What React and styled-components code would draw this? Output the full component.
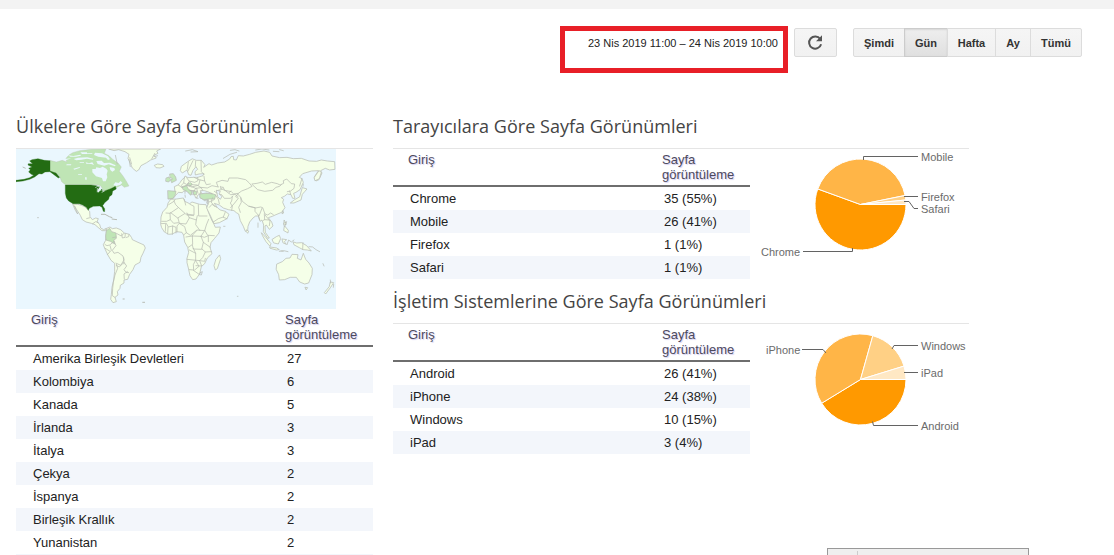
import React from 'react'
import styled, { createGlobalStyle } from 'styled-components';

const GlobalStyle = createGlobalStyle`
    body {
        margin: 0;
        background: #fff;
        color: #222;
        font-family: "Liberation Sans", Arial, sans-serif;
        font-size: 13px;
        overflow: hidden;
    }
`;

const Page = styled.div`
    height: 555px;
    overflow: hidden;
    display: flex;
    flex-direction: column;
`;

const TopStrip = styled.div`
    flex: none;
    height: 9px;
    background: #f3f3f3;
`;

const Toolbar = styled.div`
    flex: none;
    display: flex;
    align-items: flex-start;
    height: 106px;
    box-sizing: border-box;
    padding: 17px 32px 0 0;
    justify-content: flex-end;
`;

const DateRange = styled.div`
    box-sizing: border-box;
    width: 228px;
    height: 47px;
    border: 5px solid #e81f27;
    padding: 4px 5px 0 0;
    text-align: right;
    font-size: 11px;
    line-height: 16px;
    white-space: nowrap;
`;

const Button = styled.button`
    box-sizing: border-box;
    height: 29px;
    width: ${props => props.$width}px;
    margin: 2px 0 0 ${props => props.$gap || 0}px;
    padding: 0;
    display: flex;
    align-items: center;
    justify-content: center;
    border: 1px solid ${props => props.$active ? '#ccc' : '#dcdcdc'};
    border-radius: ${props => props.$radius || '0'};
    background: ${props => props.$active
        ? 'linear-gradient(#eee, #e0e0e0)'
        : 'linear-gradient(#f5f5f5, #f1f1f1)'};
    box-shadow: ${props => props.$active ? 'inset 0 1px 2px rgba(0,0,0,.1)' : 'none'};
    color: #333;
    font: bold 11px "Liberation Sans", Arial, sans-serif;
`;

const ButtonGroup = styled.div`
    display: flex;
    margin-left: 16px;
    ${Button} + ${Button} {
        margin-left: -1px;
    }
`;

const Columns = styled.div`
    flex: none;
    display: flex;
    gap: 20px;
    padding-left: 16px;
`;

const Column = styled.div`
    width: ${props => props.$width}px;
`;

const Section = styled.section`
    height: ${props => props.$height ? props.$height + 'px' : 'auto'};
`;

const Title = styled.h2`
    margin: 0;
    height: 33px;
    border-bottom: 1px solid #e5e5e5;
    font: normal 18px/23px "Open Sans", sans-serif;
    color: #444;
    letter-spacing: 0.02px;
    white-space: nowrap;
`;

const Body = styled.div`
    display: flex;
`;

const Table = styled.table`
    width: 357px;
    border-collapse: collapse;
    table-layout: fixed;
`;

const HeadCell = styled.th`
    height: 36px;
    padding: 0 0 0 15px;
    width: ${props => props.$width || 'auto'};
    vertical-align: top;
    text-align: left;
    font-weight: normal;
    line-height: 15px;
    color: #4d4a5e;
    text-shadow: 1px 1px 1px #d3cdf0;
    border-bottom: 2px solid #6e6e6e;
    > span {
        display: block;
        padding-top: 3px;
    }
`;

const Row = styled.tr`
    height: 23px;
    background: ${props => props.$shaded ? '#f3f6fb' : 'transparent'};
`;

const Cell = styled.td`
    padding: 0 0 0 17px;
    line-height: 23px;
`;

const Map = styled.svg`
    display: block;
    background: #eaf7fe;
`;

const Chart = styled.svg`
    display: block;
    font: 11px "Liberation Sans", Arial, sans-serif;
`;

const Notice = styled.div`
    position: absolute;
    left: 827px;
    top: 548px;
    width: 200px;
    height: 7px;
    border: 1px solid #999;
    border-bottom: 0;
    background: #efefef;
    overflow: hidden;
`;

const NoticeMark = styled.div`
    margin: 2px 0 0 29px;
    height: 6px;
    border-left: 1px solid #ccc;
`;

const countries = [
    ['Amerika Birleşik Devletleri', '27'],
    ['Kolombiya', '6'],
    ['Kanada', '5'],
    ['İrlanda', '3'],
    ['İtalya', '3'],
    ['Çekya', '2'],
    ['İspanya', '2'],
    ['Birleşik Krallık', '2'],
    ['Yunanistan', '2'],
    ['', ''],
];

const browsers = [
    ['Chrome', '35 (55%)'],
    ['Mobile', '26 (41%)'],
    ['Firefox', '1 (1%)'],
    ['Safari', '1 (1%)'],
];

const systems = [
    ['Android', '26 (41%)'],
    ['iPhone', '24 (38%)'],
    ['Windows', '10 (15%)'],
    ['iPad', '3 (4%)'],
];

const browserLabels = [
    { text: 'Mobile', x: 171, y: 12, line: 'M113.5 11V7.5H168' },
    { text: 'Firefox', x: 171, y: 52, line: 'M154 47.5H168' },
    { text: 'Safari', x: 171, y: 64, line: 'M154 52.5H159L164 59.5H168' },
    { text: 'Chrome', x: 11, y: 107, line: 'M102.5 99V102.5H53' },
];

const systemLabels = [
    { text: 'iPhone', x: 16, y: 30, line: 'M52 25.5H73L76 29' },
    { text: 'Windows', x: 171, y: 26, line: 'M142 25L144 21.5H168' },
    { text: 'iPad', x: 171, y: 53, line: 'M154 48.5H168' },
    { text: 'Android', x: 171, y: 106, line: 'M122.5 97.5L123.5 101.5H168' },
];

const pieColors = ['#ff9900', '#ffb547', '#ffd085', '#ffe8c4'];

function slicePath(start, end) {
    const point = a => `${Math.cos(a) * 45.5} ${Math.sin(a) * 45.5}`;
    const large = end - start > Math.PI ? 1 : 0;
    return `M0 0L${point(start)}A45.5 45.5 0 ${large} 1 ${point(end)}Z`;
}

function Pie({ values, labels }) {
    const total = values.reduce((a, b) => a + b, 0);
    let angle = 0;
    return (
        <Chart width="219" height="120">
            <g transform="translate(110.5 55.5)" stroke="#fff" strokeWidth="1">
                {values.map((value, i) => {
                    const start = angle;
                    angle += value / total * Math.PI * 2;
                    return <path key={i} d={slicePath(start, angle)} fill={pieColors[i]} />
                })}
            </g>
            {labels.map(label => (
                <g key={label.text}>
                    <path d={label.line} fill="none" stroke="#636363" />
                    <text x={label.x} y={label.y} fill="#6b6b6b">{label.text}</text>
                </g>
            ))}
        </Chart>
    )
}

function DataTable({ rows }) {
    return (
        <Table>
            <thead>
                <tr>
                    <HeadCell $width="239px"><span>Giriş</span></HeadCell>
                    <HeadCell><span>Sayfa<br />görüntüleme</span></HeadCell>
                </tr>
            </thead>
            <tbody>
                {rows.map((row, i) => (
                    <Row key={i} $shaded={i % 2 === 1}>
                        <Cell>{row[0]}</Cell>
                        <Cell>{row[1]}</Cell>
                    </Row>
                ))}
            </tbody>
        </Table>
    )
}

function WorldMap() {
    return (
        <Map width="320" height="160" viewBox="0 0 320 160">
            {/* Americas */}
            <g transform="translate(-6 -4) scale(.3333)" fill="#f5ffe8" stroke="#b8bcb4" strokeWidth="2.2" strokeLinejoin="round">
                <path d="M296 12L312 17 326 14 345 20 357 28 354 40 361 55 367 69 379 79 386 75 393 62 410 53 422 45 439 39 432 31 444 25 440 18 452 12Z" />
                <path d="M433 61L443 57 458 59 462 64 450 69 438 68Z" />
                <path d="M188 177L203 178 214 181 226 186 232 193 239 199 240 215 247 224 257 219 265 221 261 231 269 238 272 249 281 254 289 250 286 257 276 257 264 247 255 239 244 235 228 231 217 224 211 211 200 194 193 182 203 207 196 196Z" />
                <path d="M290 250L300 246 307 251 319 249 332 254 343 264 358 268 365 278 367 284 384 292 402 300 406 309 399 325 393 337 390 352 375 360 369 374 359 388 353 403 342 405 342 414 331 421 330 430 322 440 324 450 315 457 319 470 309 473 302 463 304 449 306 427 311 405 314 379 314 355 303 346 293 329 284 310 280 299 287 286Z" />
                <path fill="#bfe5b5" strokeWidth="1" d="M120 46L139 51 157 46 170 51 168 40 177 30 188 23 209 17 244 13 288 12 283 25 297 32 308 43 325 55 334 66 328 79 339 93 348 107 357 123 343 127 335 120 318 128 305 131 292 137 280 136 272 122 260 119H166L155 110 148 92 137 83 120 80Z" />
                <path fill="#bfe5b5" d="M289 257L299 250 305 260 318 264 319 280 311 286 314 297 301 289 288 285 287 273Z" />
                <g fill="#eaf7fe" stroke="none">
                    <path d="M247 72H257L259 67 270 69 278 65 289 71 293 77 290 88 292 97 287 109H279L276 99 258 94 247 82Z" />
                    <path d="M174 31L190 33 211 29 213 32 198 35 181 35ZM191 42L204 38 232 37 250 41 249 44 231 41 214 44 199 46ZM211 22H231V25H247V27H216ZM255 23L276 25 294 34 300 43 294 45 288 38 265 35 252 30ZM259 48L275 47 282 54 300 53 317 61 315 64 296 58 283 62 263 57ZM299 66L313 69 315 75 307 80 301 75ZM227 52L237 55 247 52 252 60 244 57 229 56ZM170 58L184 58 183 61H169ZM190 71L209 66 210 68 193 74ZM184 40L169 45 159 44 168 41ZM208 52H222V54H210ZM225 97H230V104H226ZM205 88H216V90H204ZM316 112L326 114 332 108 337 113 331 119 319 123 310 121Z" />
                </g>
                <path fill="#236c13" stroke="#236c13" strokeWidth="1" d="M120 47V78L131 82 138 84 149 97 145 99 132 89 120 80 105 81 96 87 87 86 74 96 59 103 39 108 18 110 18 106 42 103 59 98 71 91 64 88 56 81 61 74 56 70 66 66 54 60 55 56 68 56 59 48 66 44 84 41 103 46ZM166 120H243L259 122 270 126 264 132 262 139 266 143 270 137 276 132 277 139 286 137 302 131 311 127 316 124 319 132 308 138 306 149 298 155 296 163 284 173 278 182 284 191 284 200 280 199 276 187 269 183 250 184 238 190 235 196 229 187 218 180 208 176 189 176 176 168 169 159 166 145Z" />
                <path fill="none" stroke="#eaf7fe" strokeWidth="2" d="M256 128L263 124 271 128M262 129V142M270 130L273 138M275 142L284 138" />
                <path fill="none" strokeWidth="3" d="M273 208L285 208 298 215 307 218M305 222L321 224M338 462H344M397 472H405M82 218H86M38 66L47 70" />
                <path d="M322 58L316 30M359 37L365 58M435 24L425 42M361 66L357 42M444 32L431 35M240 218L229 221M247 237L257 230 266 233M319 265L334 273 343 264M313 289L299 300 291 302 284 298M300 301L304 316 291 330M312 288L318 302 307 316 312 325 324 322 339 333 342 345 332 361 317 354M318 361L328 366 342 352 350 363 342 374 348 382 357 383M319 357L323 370 315 390 310 412 308 431 307 452 316 458M343 403L342 387 353 379M335 265L337 279 345 277 346 265M347 278L356 275 357 268M342 358L341 337M284 309L300 319M307 278L319 276" fill="none" />
            </g>

            {/* Europe, Africa, Asia and Oceania */}
            <g transform="translate(154 -4) scale(.3333)" fill="#f5ffe8" stroke="#b8bcb4" strokeWidth="2.2" strokeLinejoin="round" strokeLinecap="round">
                <path d="M3 163L20 162 40 159 44 169 59 176 66 171 89 178 108 179 116 203 125 225 132 238 136 247 151 246 147 264 134 280 123 293 120 307 126 326 112 339 104 356 94 365 89 387 78 402 68 404 60 392 55 369 51 353 51 340 56 322 53 307 44 291 41 271 36 262 20 260 7 267 -4 268 -17 261 -25 248 -28 238 -27 216 -22 201 -9 187 -6 175Z" />
                <path d="M149 331L152 341 142 371 136 375 132 362 137 345Z" />
                <path d="M80 46L94 46 105 59 101 67 117 56 125 60 143 54 164 51 179 42 183 35 190 34 191 44 199 45 205 32 220 33 239 28 257 22 282 18 299 22 306 33 329 38 351 37 370 41 394 40 417 48 440 49 454 45 472 48 494 50 495 73 479 75 466 70 452 77 456 84 447 104 438 108 433 96 440 85 446 77 425 78 398 86 388 97 396 101 400 112 390 134 378 142 371 145 375 160 368 160 363 149 352 147 343 154 334 158 341 163 338 172 345 188 335 202 318 209 307 214 295 218 305 231 309 243 298 253 289 240 285 243 286 262 298 279 293 280 280 260 281 240 276 225 270 229 265 213 257 213 249 219 239 231 234 244 233 258 226 259 220 244 211 227 206 207 199 203 192 197 175 194 160 189 148 180 133 175 143 189 151 195 166 199 177 208 171 221 148 233 132 236 123 216 110 189 116 172 115 163 101 165 90 157 92 145 83 151 80 159 72 151 69 139 62 136 67 149 55 143 49 137 40 139 37 143 25 142 17 151 10 160 -4 162 -4 142 15 139 13 125 24 120 30 113 36 104 43 99 45 93 54 98 71 97 83 97 99 92 102 86 87 87 76 90 75 80 83 73 78 65 69 76 63 91 56 89 51 75 37 84 31 77 34 64 53 50 66 42Z" />
                <path fill="#c3e8ba" d="M-6 137L18 139 15 151 9 160 -5 162ZM0 87L10 86 17 96 19 106 5 113 2 105 8 102 1 97ZM-11 99L-3 96 2 104 -4 111 -12 109ZM37 125L50 121 53 130 66 141 62 151 51 139 40 134ZM90 147L107 144 130 147 137 150 134 162 116 162 102 164 91 159ZM53 116L62 113 67 118 61 122ZM70 138L80 139 79 150 71 148Z" />
                <path d="M321 357L337 350 348 340 360 339 366 328 384 329 382 340 393 345 400 325 407 343 417 354 427 370 426 389 416 414 404 417 389 411 379 397 361 397 344 404 328 405 326 389 319 374ZM406 427L413 428 409 434Z" />
                <path d="M275 264L287 277 303 296 300 304 288 290 278 273ZM307 283L319 275 328 271 332 281 325 297 312 294ZM300 306L320 309 328 314 319 315 301 310ZM370 291L380 294 395 293 410 302 424 318 412 315 399 314 388 308 373 300ZM337 282L350 284 343 290 349 298 340 294ZM343 226L349 238 342 240ZM344 243L355 256 354 264 342 257Z" />
                <path d="M398 128L411 132 404 140 397 148 393 165 372 174 361 174 374 164 388 156ZM433 97L447 77 454 82 448 101 436 107ZM230 255L236 259 233 265 229 260ZM339 198L341 204 337 206Z" />
                <path d="M482 411L491 413 482 427 467 447 463 443 477 426Z" />
                <path fill="none" d="M160 40L180 28 200 22M181 16L195 14 207 18M257 15L276 12 297 15M47 18L67 14 84 20 63 21M310 19L327 20M329 14L340 17M341 235L350 230 344 245M417 305L428 306 438 314 449 320M459 356L462 363M328 319L341 317 354 320M351 299L356 285 364 291 372 285M481 405L482 414M491 418L490 427M161 244H165M202 454H204M264 234V247M265 210L269 224M389 123L396 100M400 117L399 124" />
                <path fill="none" d="M-4 179L12 169 15 164M12 168L17 179 26 188 47 207 72 210 72 184 60 178M85 179L86 213H111M47 180L43 163M25 188L0 205 -12 204M0 205L1 224 -10 229 -25 229M2 203L23 219 44 206M24 219L28 235 48 237 58 219 51 204M58 218L79 225 82 212M51 210L71 212M29 236L44 245 49 263 41 270M49 263L61 271 81 255 104 257 109 240 116 223M79 225L77 239 90 257M104 256L113 271 133 272M80 257L67 271 68 298 55 307M67 273L48 276M67 273L93 274 100 292 95 313 70 312 67 300M100 292L121 307M93 274L103 258M93 274L103 277 115 272 115 290M96 312L106 321 124 320M70 310L77 325 77 345 70 359 71 375 58 374M51 343L89 347 98 338 106 321M77 347L87 364 74 375M89 347L95 363 78 362M90 347L104 349 106 340M70 376L86 387M58 315L77 325M1 224L11 235 25 233M-26 236L-11 235 -5 246 8 243 18 247 18 264M28 235L21 243 21 261M8 243L7 268M-13 238L-14 259M-6 247L-7 267M91 383L97 380 94 390 89 389Z" />
                <path fill="none" d="M55 51L52 73M77 48L76 64M69 47L54 78M93 47L94 80 102 88M43 98L41 114 34 121 37 128M50 98L57 108 74 112 84 107 83 97M42 114L58 123 67 119 81 120 92 127 112 129 126 122 145 126M72 97L87 104 104 108 102 94M104 108L109 119 121 117M25 120L36 128 51 121M57 110L51 121 65 126 84 121M65 125L77 130 92 128M77 130L70 142M80 130L84 145M90 105L86 120M92 127L98 135 90 144M60 136L74 137M140 137L154 134 151 124 159 129M144 125L139 112 156 106 174 109 177 99 203 99 227 104 238 114 246 124 233 131 215 138 205 145 191 147 184 140 164 136 159 126M153 131L166 137 182 149 195 148 204 155M133 139L145 147 155 149 163 160 181 160 189 153M246 117L261 115 277 111 286 118 305 112 322 116 330 120 341 115 340 107 350 102 364 116 374 117 372 130 362 138 352 140M247 119L263 134 284 139 308 136 318 127 329 124 334 119M204 148L212 157 217 169 235 183 256 189 272 186 278 188 285 207 293 210 302 204 310 209M187 155L185 168 181 174 187 184 185 196M205 145L197 155 205 160 194 174 182 188M212 158L214 172 206 187 211 202M255 189L255 199 267 213 276 190M237 184L255 188M283 207L284 224 280 226M286 211L300 228 298 242M284 224L297 225M136 149L145 163 148 176M134 162L123 171 135 185M117 171L124 168 128 158M118 187L126 178 140 187M130 231L145 221 160 216 166 201M160 217L171 221M359 138L362 148M399 293L398 313M333 318L340 319" />
                <path fill="#eaf7fe" d="M140 136L151 139 147 147 156 154 151 163 144 156ZM92 137L103 137 113 140 127 146 109 144 97 146ZM112 166L110 174 113 177Z" />
                <path fill="none" d="M76 158L84 160M103 167L109 167M177 143L183 138M45 150L46 157M45 139L45 145" />
            </g>
        </Map>
    )
}

export default function App() {
    const ranges = [
        { text: 'Şimdi', width: 52, radius: '2px 0 0 2px' },
        { text: 'Gün', width: 44, active: true },
        { text: 'Hafta', width: 49 },
        { text: 'Ay', width: 36 },
        { text: 'Tümü', width: 52, radius: '0 2px 2px 0' },
    ];

    return (
        <Page>
            <GlobalStyle />
            <TopStrip />
            <Toolbar>
                <DateRange>23 Nis 2019 11:00 – 24 Nis 2019 10:00</DateRange>
                <Button $width={43} $gap={6} $radius="2px" aria-label="Yenile">
                    <svg width="17" height="17" viewBox="0 0 17 17">
                        <path d="M13.2 5A6.1 6.1 0 1 0 14.1 10.2" fill="none" stroke="#555" strokeWidth="2" />
                        <path d="M15 1.2V7.2H9Z" fill="#555" />
                    </svg>
                </Button>
                <ButtonGroup>
                    {ranges.map(range => (
                        <Button key={range.text} $width={range.width} $radius={range.radius} $active={range.active}>
                            {range.text}
                        </Button>
                    ))}
                </ButtonGroup>
            </Toolbar>
            <Columns>
                <Column $width={357}>
                    <Title>Ülkelere Göre Sayfa Görünümleri</Title>
                    <WorldMap />
                    <DataTable rows={countries} />
                </Column>
                <Column $width={576}>
                    <Section $height={175}>
                        <Title>Tarayıcılara Göre Sayfa Görünümleri</Title>
                        <Body>
                            <DataTable rows={browsers} />
                            <Pie values={[35, 26, 1, 1]} labels={browserLabels} />
                        </Body>
                    </Section>
                    <Section>
                        <Title>İşletim Sistemlerine Göre Sayfa Görünümleri</Title>
                        <Body>
                            <DataTable rows={systems} />
                            <Pie values={[26, 24, 10, 3]} labels={systemLabels} />
                        </Body>
                    </Section>
                </Column>
            </Columns>
            <Notice><NoticeMark /></Notice>
        </Page>
    );
}
